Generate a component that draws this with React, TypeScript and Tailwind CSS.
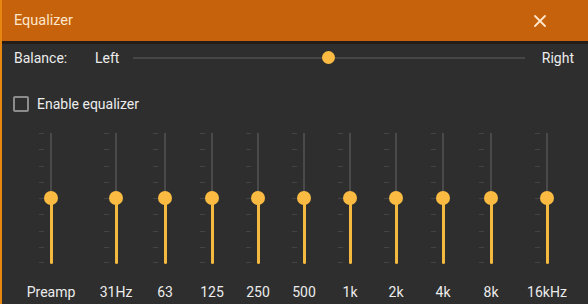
import React from 'react';
import { X } from 'lucide-react';

interface Band {
  label: string;
  offset: string; // left margin that puts the column where the reference has it
}

const bands: Band[] = [
  { label: 'Preamp', offset: 'ml-[26px]' },
  { label: '31Hz', offset: 'ml-[19px]' },
  { label: '63', offset: 'ml-[3px]' },
  { label: '125', offset: 'ml-[1px]' },
  { label: '250', offset: 'ml-0' },
  { label: '500', offset: 'ml-0' },
  { label: '1k', offset: 'ml-0' },
  { label: '2k', offset: 'ml-0' },
  { label: '4k', offset: 'ml-[1px]' },
  { label: '8k', offset: 'ml-[2px]' },
  { label: '16kHz', offset: 'ml-[10px]' },
];

const ticks = [0, 16, 33, 49, 65, 81, 98, 114, 129];

const VerticalSlider: React.FC = () => {
  return (
    <div className="relative w-[46px] h-[131px]">
      {/* scale marks */}
      {ticks.map((t) => (
        <div key={t} className="absolute left-[11px] w-[5px] h-px bg-[#444444]" style={{ top: t }} />
      ))}
      {/* track above thumb */}
      <div className="absolute left-[22px] top-0 w-[2px] h-[66px] bg-[#4a4a4a]" />
      {/* filled part below thumb */}
      <div className="absolute left-[21.5px] top-[65px] w-[3px] h-[66px] bg-[#f6b940] rounded-b-sm" />
      {/* thumb */}
      <div className="absolute left-[16px] top-[58px] w-[14px] h-[14px] rounded-full bg-[#fbbb43]" />
    </div>
  );
};

export default function App() {
  return (
    <div
      className="w-[588px] h-[304px] overflow-hidden bg-[#2e2e2e] border-l-2 border-[#e8870f] flex flex-col text-[#ececec]"
      style={{ fontFamily: 'Roboto, "Noto Sans", sans-serif' }}
    >
      {/* Title bar */}
      <div className="h-[44px] shrink-0 bg-[#c6620b] border-b-[3px] border-[#241d17] flex items-center justify-between pl-[12px] pr-[40px]">
        <span className="text-[14.5px] text-[#fde6cc]">Equalizer</span>
        <X className="w-[20px] h-[20px] text-[#fde6cc] -mr-[2px]" strokeWidth={2.2} />
      </div>

      {/* Balance */}
      <div className="h-[28px] flex items-center pl-[12px] pr-[14px] text-[14px]">
        <span className="w-[81px]">Balance:</span>
        <span>Left</span>
        <div className="relative flex-1 mx-[14px] h-[14px] flex items-center">
          <div className="w-full h-[2px] bg-[#464646]" />
          <div className="absolute left-1/2 top-0 -ml-[7px] w-[13px] h-[13px] rounded-full bg-[#fbbb43]" />
        </div>
        <span className="ml-[3px]">Right</span>
      </div>

      {/* Enable checkbox */}
      <div className="mt-[22px] h-[20px] flex items-center pl-[11px] text-[14px]">
        <div className="w-[16px] h-[16px] border-2 border-[#8c8c8c] rounded-[2px]" />
        <span className="ml-[8px]">Enable equalizer</span>
      </div>

      {/* Bands */}
      <div className="mt-[19px] flex">
        {bands.map((b) => (
          <div key={b.label} className={`${b.offset} w-[46px] flex flex-col items-center`}>
            <VerticalSlider />
            <span className="mt-[20px] text-[14px] leading-[16px] whitespace-nowrap">{b.label}</span>
          </div>
        ))}
      </div>
    </div>
  );
}
